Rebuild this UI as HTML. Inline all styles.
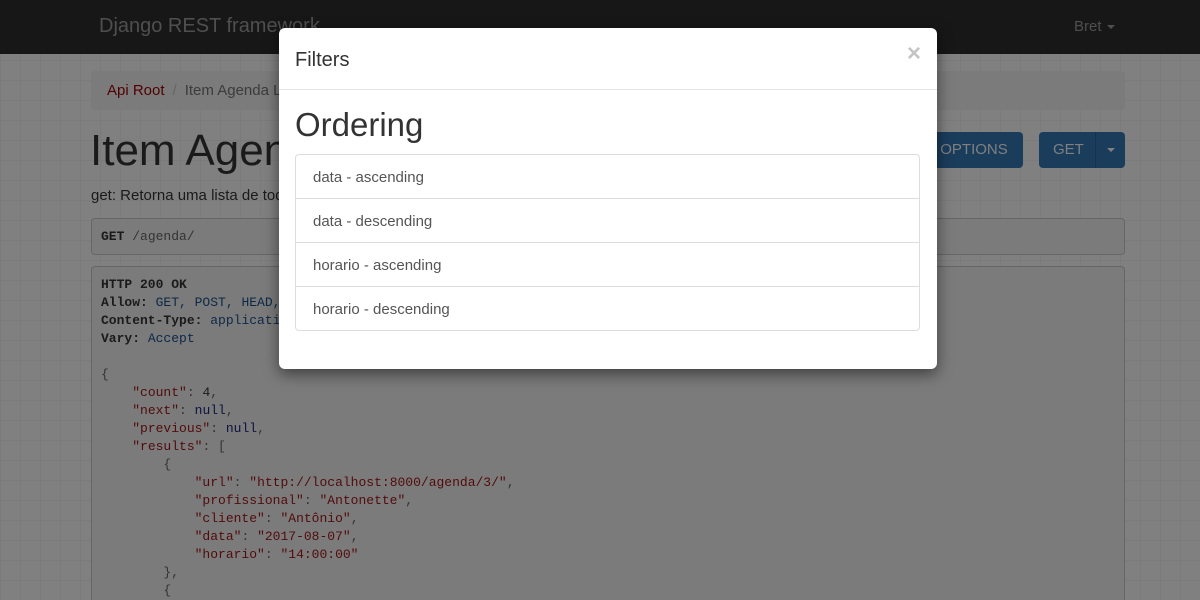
<!DOCTYPE html>
<html><head><meta charset="utf-8"><style>
*{box-sizing:border-box}
html,body{margin:0;width:1200px;height:600px;overflow:hidden}
body{font-family:"Liberation Sans",sans-serif;color:#1a1a1a;background-color:#808080;
background-image:linear-gradient(#7b7b7b 1px,transparent 1px),linear-gradient(90deg,#7b7b7b 1px,transparent 1px);background-size:20px 20px;position:relative}
.nav{height:54px;background:#171717;position:relative}
.brand{position:absolute;left:99px;top:15px;font-size:20px;color:#4f4f4f}
.user{position:absolute;left:1074px;top:18px;font-size:15px;color:#4f4f4f}
.caret{display:inline-block;border-top:4px solid #4f4f4f;border-left:4px solid transparent;border-right:4px solid transparent;vertical-align:middle;margin-left:5px}
.bc{position:absolute;left:91px;top:71px;width:1034px;height:39px;background:#7b7b7b;border-radius:4px;font-size:15px;padding:11px 16px;color:#3b3b3b}
.bc a{color:#520000}.bc span{color:#666;margin:0 8px}
h1{position:absolute;left:90px;top:126px;margin:0;font-size:44px;font-weight:400}
.desc{position:absolute;left:91px;top:187px;font-size:15px}
.btn{position:absolute;top:132px;height:36px;background:#1a3d5c;border-radius:4px;color:#808080;font-size:15px;line-height:36px}
pre{position:absolute;left:91px;width:1034px;margin:0;background:#7b7b7b;border:1px solid #666;border-radius:4px;font-family:"Liberation Mono",monospace;font-size:13px;line-height:18px;padding:9px 9px;overflow:hidden;color:#1a1a1a}
.k,.s{color:#520b0b}.p{color:#333}.b{color:#0d2846}.n{color:#0d123f}
.modal{position:absolute;left:279px;top:28px;width:658px;height:341px;background:#fff;border-radius:6px;box-shadow:0 5px 15px rgba(0,0,0,.5);color:#333}
.mh{height:62px;border-bottom:1px solid #e5e5e5;padding:21px 16px;font-size:20px;position:relative}
.x{position:absolute;right:16px;top:12px;font-size:24px;font-weight:700;color:#c4c4c4}
.mo{position:absolute;left:16px;top:78px;font-size:33px}
.list{position:absolute;left:16px;top:126px;width:625px;border:1px solid #ddd;border-radius:4px}
.list div{height:44px;line-height:45px;padding-left:17px;font-size:15px;border-top:1px solid #ddd;color:#555}
.list div:first-child{border-top:0;height:43px}
</style></head><body>
<div class="nav"><div class="brand">Django REST framework</div><div class="user">Bret<span class="caret"></span></div></div>
<div class="bc"><a>Api Root</a><span>/</span>Item Agenda List</div>
<h1>Item Agenda List</h1>
<div class="desc">get: Retorna uma lista de todos os itens da agenda.</div>
<div class="btn" style="left:925px;width:98px;text-align:center">OPTIONS</div>
<div class="btn" style="left:1039px;width:86px"><span style="padding-left:14px">GET</span><span style="position:absolute;left:56px;top:0;bottom:0;border-left:1px solid #15324b;width:30px"></span><span class="caret" style="position:absolute;left:63px;top:16px;border-top-color:#808080"></span></div>
<pre style="top:218px;height:37px"><b>GET</b> <span class="p">/agenda/</span></pre>
<pre style="top:266px;height:334px;border-bottom:0;border-radius:4px 4px 0 0"><b>HTTP 200 OK</b>
<b>Allow:</b> <span class="b">GET, POST, HEAD, OPTIONS</span>
<b>Content-Type:</b> <span class="b">application/json</span>
<b>Vary:</b> <span class="b">Accept</span>

<span class="p">{</span>
    <span class="k">"count"</span><span class="p">:</span> 4<span class="p">,</span>
    <span class="k">"next"</span><span class="p">:</span> <span class="n">null</span><span class="p">,</span>
    <span class="k">"previous"</span><span class="p">:</span> <span class="n">null</span><span class="p">,</span>
    <span class="k">"results"</span><span class="p">: [</span>
        <span class="p">{</span>
            <span class="k">"url"</span><span class="p">:</span> <span class="s">"http://localhost:8000/agenda/3/"</span><span class="p">,</span>
            <span class="k">"profissional"</span><span class="p">:</span> <span class="s">"Antonette"</span><span class="p">,</span>
            <span class="k">"cliente"</span><span class="p">:</span> <span class="s">"Antônio"</span><span class="p">,</span>
            <span class="k">"data"</span><span class="p">:</span> <span class="s">"2017-08-07"</span><span class="p">,</span>
            <span class="k">"horario"</span><span class="p">:</span> <span class="s">"14:00:00"</span>
        <span class="p">},</span>
        <span class="p">{</span></pre>
<div class="modal">
<div class="mh">Filters<span class="x">×</span></div>
<div class="mo">Ordering</div>
<div class="list"><div>data - ascending</div><div>data - descending</div><div>horario - ascending</div><div>horario - descending</div></div>
</div>
</body></html>
